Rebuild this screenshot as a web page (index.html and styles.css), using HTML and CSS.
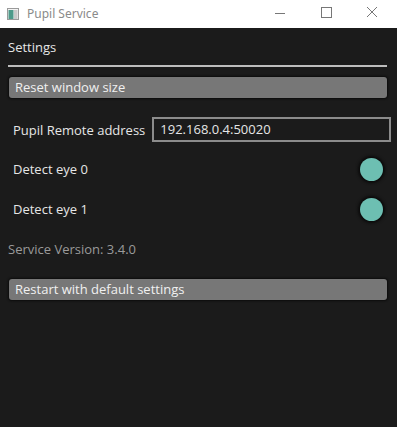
FILE: index.html
```html
<!DOCTYPE html>
<html lang="en">
<head>
  <meta charset="UTF-8">
  <title>Pupil Service</title>
  <link rel="stylesheet" href="styles.css">
</head>
<body>

<div class="titlebar">
  <svg class="app-icon" width="12" height="12" viewBox="0 0 12 12">
    <rect x="0.5" y="0.5" width="11" height="11" fill="#f4f4f4" stroke="#9a9a9a"/>
    <rect x="1.5" y="2" width="5" height="9" fill="#4d9a8a"/>
    <rect x="7" y="2" width="3.5" height="9" fill="#c9c9c9"/>
  </svg>
  <span class="title">Pupil Service</span>
  <div class="controls">
    <svg width="46" height="28" viewBox="0 0 46 28"><line x1="18" y1="13.5" x2="28" y2="13.5" stroke="#777" stroke-width="1"/></svg>
    <svg width="46" height="28" viewBox="0 0 46 28"><rect x="18.5" y="7.5" width="10" height="10" fill="none" stroke="#777" stroke-width="1"/></svg>
    <svg width="46" height="28" viewBox="0 0 46 28"><path d="M18 7 L28 17 M28 7 L18 17" stroke="#777" stroke-width="1"/></svg>
  </div>
</div>

<div class="window">
  <div class="header">Settings</div>
  <div class="rule"></div>

  <div class="button">Reset window size</div>

  <div class="row address-row">
    <span class="label">Pupil Remote address</span>
    <div class="field">192.168.0.4:50020</div>
  </div>

  <div class="row switch-row">
    <span class="label">Detect eye 0</span>
    <span class="knob"></span>
  </div>

  <div class="row switch-row">
    <span class="label">Detect eye 1</span>
    <span class="knob"></span>
  </div>

  <div class="version">Service Version: 3.4.0</div>

  <div class="button">Restart with default settings</div>
</div>

</body>
</html>
```

FILE: styles.css
```css
html, body {
  margin: 0;
  padding: 0;
  height: 100%;
}

body {
  background-color: #1b1b1b;
  font-family: "Open Sans", "Noto Sans", sans-serif;
  font-size: 13px;
  color: #e6e6e6;
}

.titlebar {
  height: 28px;
  background-color: #ffffff;
  display: flex;
  align-items: center;
}

.app-icon {
  margin-left: 7px;
  margin-top: -1px;
}

.title {
  margin-left: 8px;
  color: #8a8a8a;
  font-family: "Noto Sans", "Open Sans", sans-serif;
  font-size: 12px;
  margin-top: -2px;
}

.controls {
  margin-left: auto;
  display: flex;
  margin-right: 2px;
}

.controls svg {
  display: block;
}

.window {
  padding: 0 10px 0 8px;
}

.header {
  padding-top: 10px;
  height: 18px;
  line-height: 18px;
}

.rule {
  margin-top: 9px;
  height: 2px;
  background-color: #bdbdbd;
}

.button {
  margin: 10px 0 0 1px;
  height: 21px;
  line-height: 20px;
  background-color: #777777;
  border-radius: 3px;
  padding-left: 6px;
  color: #f0f0f0;
  box-shadow: 0 0 2px 1px #0c0c0c;
}

.row {
  display: flex;
  align-items: center;
  padding-left: 5px;
}

.address-row {
  margin-top: 19px;
}

.label {
  line-height: 18px;
}

.field {
  margin-left: 7px;
  flex: 1;
  height: 21px;
  line-height: 21px;
  border: 2px solid #8c8c8c;
  padding-left: 6px;
  margin-right: -4px;
}

.switch-row {
  justify-content: space-between;
  margin-top: 14px;
  height: 26px;
}

.knob {
  width: 23px;
  height: 23px;
  border-radius: 50%;
  background-color: #6dbfb2;
  box-shadow: 0 0 3px 2px #0a0a0a;
  margin-right: 4px;
}

.version {
  margin-top: 18px;
  color: #9a9a9a;
  line-height: 18px;
}

.version + .button {
  margin-top: 21px;
}
```
